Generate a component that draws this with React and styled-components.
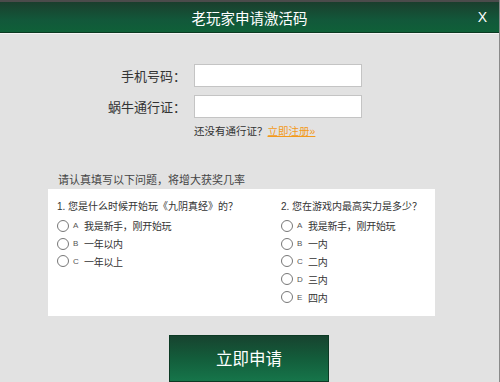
import React from 'react';
import styled, { createGlobalStyle } from 'styled-components';

const GlobalStyle = createGlobalStyle`
  html, body {
    margin: 0;
    padding: 0;
    background: #e2e2e2;
  }
  body {
    font-family: "Liberation Sans", "Noto Sans CJK SC", sans-serif;
    color: #333;
  }
`

const Dialog = styled.div`
  width: 500px;
  height: 382px;
  overflow: hidden;
  background: #e2e2e2;
  border-right: 1px solid #8a8a8a;
  box-sizing: border-box;
`

const Header = styled.div`
  height: 30px;
  border-top: 2px solid #4b4b4b;
  border-bottom: 1px solid #0b3a22;
  box-shadow: 0 1px 0 #f4f4f4;
  background: linear-gradient(to bottom, #1a3e2d, #12583a 60%, #0f6038);
  display: flex;
  align-items: center;
  justify-content: center;
  position: relative;
  color: #fff;
  font-size: 14.5px;
`

const Close = styled.span`
  position: absolute;
  right: 12px;
  top: 7px;
  font-size: 14px;
  font-family: "Liberation Sans", sans-serif;
`

const Form = styled.div`
  margin-top: 31px;
  display: grid;
  grid-template-columns: 186px 168px;
  column-gap: 8px;
  row-gap: 8px;
  align-items: center;
`

const Label = styled.label`
  text-align: right;
  font-size: 13px;
  color: #333;
`

const Input = styled.input`
  width: 168px;
  height: 23px;
  box-sizing: border-box;
  border: 1px solid #c4c4c4;
  background: #fff;
  outline: none;
`

const Hint = styled.div`
  grid-column: 2;
  font-size: 10.5px;
  color: #333;
  margin-top: -3px;
  a {
    color: #f39a1a;
    text-decoration: underline;
  }
`

const Prompt = styled.div`
  margin: 33px 0 0 58px;
  font-size: 11px;
  color: #444;
  line-height: 18px;
`

const Panel = styled.div`
  margin: 0 0 0 48px;
  width: 387px;
  background: #fff;
  box-sizing: border-box;
  padding: 9px 0 10px 9px;
  display: grid;
  grid-template-columns: 224px 1fr;
  height: 127px;
  white-space: nowrap;
`

const Question = styled.div`
  font-size: 10px;
  color: #333;
  line-height: 18px;
  margin-bottom: 1px;
`

const Option = styled.label`
  display: flex;
  align-items: center;
  height: 17.8px;
  font-size: 10px;
  letter-spacing: -0.3px;
  color: #333;
`

const Radio = styled.span`
  width: 10px;
  height: 10px;
  border: 1px solid #777;
  border-radius: 50%;
  background: #fff;
  margin-right: 4px;
`

const Letter = styled.span`
  font-size: 8px;
  color: #555;
  margin-right: 6px;
  width: 5px;
`

const ButtonRow = styled.div`
  display: flex;
  justify-content: center;
  margin-top: 19px;
  padding-right: 1px;
`

const Button = styled.button`
  width: 160px;
  height: 47px;
  border: 1px solid #0c3a24;
  background: linear-gradient(to bottom, #17432f, #135d3b 50%, #16754a);
  color: #fff;
  font-size: 16.5px;
  font-family: "Liberation Sans", "Noto Sans CJK SC", sans-serif;
  padding-bottom: 2px;
`

const q1 = ['我是新手，刚开始玩', '一年以内', '一年以上'];
const q2 = ['我是新手，刚开始玩', '一内', '二内', '三内', '四内'];
const letters = ['A', 'B', 'C', 'D', 'E'];

function Options({ items }) {
  return items.map((text, i) => (
    <Option key={i}>
      <Radio />
      <Letter>{letters[i]}</Letter>
      {text}
    </Option>
  ));
}

export default function App() {
  return (
    <Dialog>
      <GlobalStyle />
      <Header>
        老玩家申请激活码
        <Close>X</Close>
      </Header>
      <Form>
        <Label>手机号码：</Label>
        <Input />
        <Label>蜗牛通行证：</Label>
        <Input />
        <Hint>
          还没有通行证？<a href="#">立即注册»</a>
        </Hint>
      </Form>
      <Prompt>请认真填写以下问题，将增大获奖几率</Prompt>
      <Panel>
        <div>
          <Question>1. 您是什么时候开始玩《九阴真经》的？</Question>
          <Options items={q1} />
        </div>
        <div>
          <Question>2. 您在游戏内最高实力是多少？</Question>
          <Options items={q2} />
        </div>
      </Panel>
      <ButtonRow>
        <Button>立即申请</Button>
      </ButtonRow>
    </Dialog>
  );
}
